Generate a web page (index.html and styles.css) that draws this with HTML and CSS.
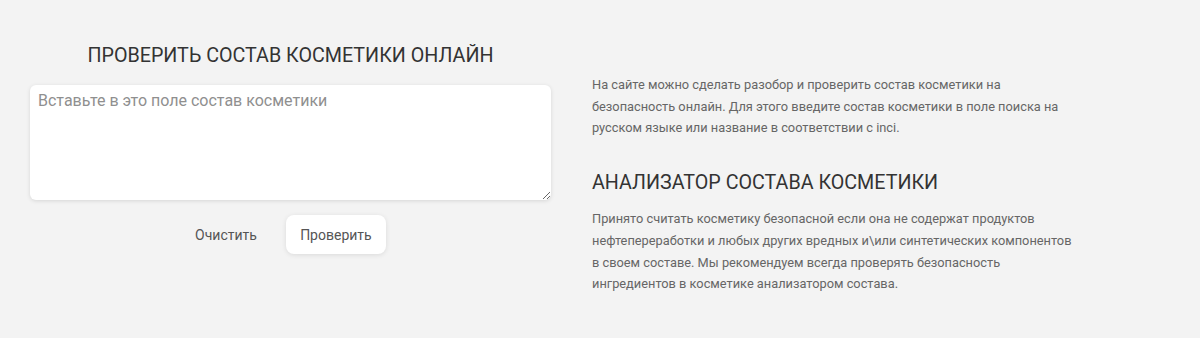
FILE: index.html
```html
<!DOCTYPE html>
<html lang="ru">
<head>
<meta charset="utf-8">
<link rel="stylesheet" href="styles.css">
</head>
<body>
<main class="page">
  <section class="checker">
    <h1 class="title">ПРОВЕРИТЬ СОСТАВ КОСМЕТИКИ ОНЛАЙН</h1>
    <textarea class="field" placeholder="Вставьте в это поле состав косметики"></textarea>
    <div class="actions">
      <button class="btn btn-plain" type="button">Очистить</button>
      <button class="btn btn-card" type="button">Проверить</button>
    </div>
  </section>
  <section class="info">
    <p class="text">На сайте можно сделать разобор и проверить состав косметики на безопасность онлайн. Для этого введите состав косметики в поле поиска на русском языке или название в соответствии с inci.</p>
    <h2 class="subtitle">АНАЛИЗАТОР СОСТАВА КОСМЕТИКИ</h2>
    <p class="text">Принято считать косметику безопасной если она не содержат продуктов нефтепереработки и любых других вредных и\или синтетических компонентов в своем составе. Мы рекомендуем всегда проверять безопасность ингредиентов в косметике анализатором состава.</p>
  </section>
</main>
</body>
</html>
```

FILE: styles.css
```css
html, body {
  margin: 0;
  height: 100%;
  background: #f3f3f3;
}
body {
  font-family: Roboto, "Noto Sans", sans-serif;
  color: #333;
}
.page {
  display: grid;
  grid-template-columns: 521px 484px;
  column-gap: 41px;
  padding: 0 0 0 30px;
}
.checker {
  display: flex;
  flex-direction: column;
  align-items: stretch;
  padding-top: 44px;
}
.title {
  margin: 0 0 17px;
  font-size: 19.7px;
  line-height: 24px;
  font-weight: 400;
  color: #333;
  text-align: center;
}
.field {
  display: block;
  box-sizing: border-box;
  width: 521px;
  height: 115px;
  margin: 0;
  padding: 6px 8px;
  border: none;
  border-radius: 6px;
  background: #fff;
  box-shadow: 0 1px 4px rgba(0,0,0,0.12);
  font-family: Roboto, "Noto Sans", sans-serif;
  font-size: 16px;
  line-height: 20px;
  color: #333;
  resize: both;
  outline: none;
}
.field::placeholder {
  color: #8f8f8f;
}
.actions {
  display: flex;
  justify-content: center;
  align-items: center;
  gap: 29px;
  margin-top: 15px;
}
.btn {
  font-family: Roboto, "Noto Sans", sans-serif;
  font-size: 14px;
  color: #555;
  border: none;
  background: transparent;
  height: 39px;
  padding: 0;
  border-radius: 8px;
  cursor: pointer;
}
.btn-card {
  background: #fff;
  width: 100px;
  box-shadow: 0 1px 5px rgba(0,0,0,0.1);
}
.info {
  padding-top: 74px;
}
.text {
  margin: 0;
  font-size: 12.8px;
  line-height: 21.7px;
  color: #666;
}
.subtitle {
  margin: 32px 0 13px;
  font-size: 19.7px;
  line-height: 24px;
  font-weight: 400;
  color: #333;
}
```
